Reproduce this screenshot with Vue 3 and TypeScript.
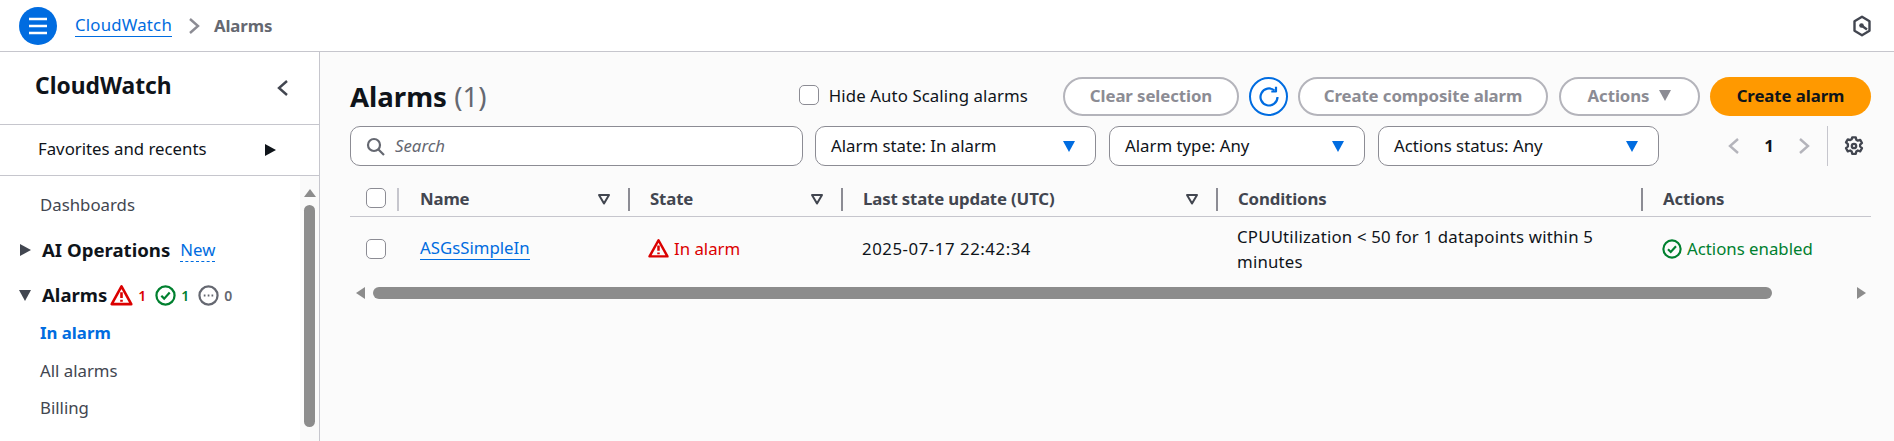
<script setup lang="ts">
const filters: { label: string; width: number }[] = [
  { label: 'Alarm state: In alarm', width: 281 },
  { label: 'Alarm type: Any', width: 256 },
  { label: 'Actions status: Any', width: 281 },
]
const columns: { label: string; sort: boolean }[] = [
  { label: 'Name', sort: true },
  { label: 'State', sort: true },
  { label: 'Last state update (UTC)', sort: true },
  { label: 'Conditions', sort: false },
  { label: 'Actions', sort: false },
]
</script>

<template>
  <div class="page">
    <header class="topbar">
      <button class="menu" aria-label="Menu">
        <svg width="20" height="20" viewBox="0 0 20 20" fill="none" stroke="#fff" stroke-width="2.4">
          <path d="M1 3h18M1 10h18M1 17h18" />
        </svg>
      </button>
      <a class="crumb-link">CloudWatch</a>
      <svg class="crumb-sep" width="12" height="18" viewBox="0 0 12 18" fill="none" stroke="#8c8c94" stroke-width="2.4">
        <path d="M2 2l8 7-8 7" />
      </svg>
      <span class="crumb-current">Alarms</span>
      <svg class="hex" width="20" height="22" viewBox="0 0 20 22" fill="none" stroke="#424650" stroke-width="2.4">
        <path d="M10 1.8l7.500 4.400v9.600l-7.500 4.400-7.500-4.400V6.200z" stroke-linejoin="round" />
        <circle cx="9.500" cy="10.500" r="2.300" fill="#424650" stroke="none" />
        <path d="M9.500 10.500l5.500 4" stroke-width="2.400" />
      </svg>
    </header>

    <div class="body">
      <aside class="side">
        <div class="side-title">
          <h2>CloudWatch</h2>
          <svg width="12" height="18" viewBox="0 0 12 18" fill="none" stroke="#424650" stroke-width="2.4">
            <path d="M10 2L2 9l8 7" />
          </svg>
        </div>
        <div class="side-fav">
          <span>Favorites and recents</span>
          <i class="tri-right dark"></i>
        </div>
        <div class="side-nav">
          <nav class="nav-list">
            <a class="nav-item dash">Dashboards</a>
            <div class="nav-section ai">
              <i class="tri-right"></i>
              <b>AI Operations</b>
              <span class="new">New</span>
            </div>
            <div class="nav-section alarms">
              <i class="tri-down"></i>
              <b>Alarms</b>
              <svg class="s-warn" width="23" height="23" viewBox="0 0 16 16" fill="none" stroke="#db0000" stroke-width="1.800" stroke-linejoin="round">
                <path d="M8 1.700L1.200 14h13.600z" />
                <path d="M8 5.800v4M8 11v1.400" />
              </svg>
              <span class="count red">1</span>
              <svg class="s-ok" width="21" height="21" viewBox="0 0 16 16" fill="none" stroke="#00802f" stroke-width="1.700">
                <circle cx="8" cy="8" r="6.900" />
                <path d="M4.800 8.200l2.200 2.200 4.200-4.600" />
              </svg>
              <span class="count green">1</span>
              <svg class="s-ok" width="21" height="21" viewBox="0 0 16 16" fill="none" stroke="#656871" stroke-width="1.700">
                <circle cx="8" cy="8" r="6.900" />
                <path d="M4.400 8h1.300M7.400 8h1.300M10.300 8h1.300" />
              </svg>
              <span class="count gray">0</span>
            </div>
            <a class="nav-item active">In alarm</a>
            <a class="nav-item all">All alarms</a>
            <a class="nav-item bill">Billing</a>
          </nav>
          <div class="side-scroll">
            <i class="sb-up"></i>
            <i class="sb-thumb"></i>
          </div>
        </div>
      </aside>

      <main class="main">
        <div class="head-row">
          <h1>Alarms <span>(1)</span></h1>
          <label class="hide-check"><i class="box"></i>Hide Auto Scaling alarms</label>
          <button class="btn disabled clear">Clear selection</button>
          <button class="refresh" aria-label="Refresh">
            <svg width="24" height="24" viewBox="0 0 24 24" fill="none" stroke="#006ce0" stroke-width="2.200">
              <path d="M20.500 12a8.500 8.500 0 1 1-3-6.500" />
              <path d="M19 1.800v4.700h-4.700" stroke-linejoin="round" />
            </svg>
          </button>
          <button class="btn disabled composite">Create composite alarm</button>
          <button class="btn disabled actions">Actions <i class="tri-small"></i></button>
          <button class="btn primary">Create alarm</button>
        </div>

        <div class="filter-row">
          <div class="search">
            <svg width="19" height="19" viewBox="0 0 19 19" fill="none" stroke="#656871" stroke-width="2.200">
              <circle cx="8" cy="8" r="6" />
              <path d="M12.500 12.500L18 18" />
            </svg>
            <span>Search</span>
          </div>
          <div v-for="f in filters" :key="f.label" class="select" :style="{ width: f.width + 'px' }">
            <span>{{ f.label }}</span>
            <i class="tri-blue"></i>
          </div>
          <div class="pager">
            <svg width="12" height="18" viewBox="0 0 12 18" fill="none" stroke="#b4b4bb" stroke-width="2.400">
              <path d="M10 2L2 9l8 7" />
            </svg>
            <b>1</b>
            <svg width="12" height="18" viewBox="0 0 12 18" fill="none" stroke="#b4b4bb" stroke-width="2.400">
              <path d="M2 2l8 7-8 7" />
            </svg>
          </div>
          <div class="prefs">
            <svg width="20" height="20" viewBox="0 0 20 20" fill="none" stroke="#424650" stroke-width="2.300" stroke-linejoin="round">
              <path d="M8.200 1.400h3.600l.5 2.400 1.500.9 2.400-.8 1.800 3.100-1.900 1.700v1.800l1.900 1.700-1.800 3.100-2.400-.8-1.500.9-.5 2.400H8.200l-.5-2.400-1.500-.9-2.400.8-1.800-3.100 1.900-1.700V8.100L2 6.400l1.800-3.100 2.400.8 1.500-.9z" />
              <circle cx="10" cy="10" r="2.200" />
            </svg>
          </div>
        </div>

        <div class="table">
          <div class="cell-check head"><i class="box"></i></div>
          <div v-for="c in columns" :key="c.label" class="th">
            <span>{{ c.label }}</span>
            <svg v-if="c.sort" width="14" height="12" viewBox="0 0 14 12" fill="none" stroke="#424650" stroke-width="2" stroke-linejoin="round">
              <path d="M2 2h10L7 10.500z" />
            </svg>
          </div>
          <div class="rule"></div>
          <div class="cell-check"><i class="box"></i></div>
          <div class="td"><a class="link">ASGsSimpleIn</a></div>
          <div class="td state">
            <svg width="21" height="21" viewBox="0 0 16 16" fill="none" stroke="#db0000" stroke-width="1.900" stroke-linejoin="round">
              <path d="M8 1.700L1.200 14h13.600z" />
              <path d="M8 5.800v4M8 11v1.400" />
            </svg>
            <span>In alarm</span>
          </div>
          <div class="td date">2025-07-17 22:42:34</div>
          <div class="td cond">CPUUtilization &lt; 50 for 1 datapoints within 5 minutes</div>
          <div class="td enabled">
            <svg width="20" height="20" viewBox="0 0 16 16" fill="none" stroke="#00802f" stroke-width="1.700">
              <circle cx="8" cy="8" r="6.900" />
              <path d="M4.800 8.200l2.200 2.200 4.200-4.600" />
            </svg>
            <span>Actions enabled</span>
          </div>
        </div>

        <div class="hscroll">
          <i class="hs-left"></i>
          <i class="hs-thumb"></i>
          <i class="hs-right"></i>
        </div>
      </main>
    </div>
  </div>
</template>

<style>
html, body { margin: 0; background: #fff; overflow: hidden; }
</style>

<style scoped>
* { box-sizing: border-box; }
.page {
  width: 1894px;
  height: 441px;
  overflow: hidden;
  font-family: "Noto Sans", "Open Sans", sans-serif;
  font-size: 16.800px;
  color: #0f141a;
  display: flex;
  flex-direction: column;
}
i { display: block; font-style: normal; }
button { font-family: inherit; }

.topbar {
  height: 52px;
  flex: none;
  border-bottom: 1px solid #c6c6cd;
  background: #fff;
  display: flex;
  align-items: center;
  padding-left: 19px;
}
.menu {
  width: 38px;
  height: 38px;
  border-radius: 50%;
  border: 0;
  padding: 0;
  background: #006ce0;
  display: flex;
  align-items: center;
  justify-content: center;
}
.crumb-link {
  margin-left: 18px;
  color: #006ce0;
  line-height: 22px;
  letter-spacing: 0.2px;
  border-bottom: 1.500px solid #006ce0;
}
.crumb-sep { margin-left: 16px; }
.crumb-current { margin-left: 14px; font-weight: 700; color: #656871; letter-spacing: -0.1px; }
.hex { margin-left: auto; margin-right: 22px; }

.body { flex: 1; display: flex; min-height: 0; }

.side {
  width: 320px;
  flex: none;
  background: #fff;
  border-right: 1px solid #c6c6cd;
  display: flex;
  flex-direction: column;
}
.side-title {
  height: 73px;
  flex: none;
  border-bottom: 1px solid #c6c6cd;
  display: flex;
  align-items: center;
  justify-content: space-between;
  padding: 0 30px 0 35px;
}
.side-title h2 { margin: 0 0 6px; font-size: 22.800px; font-weight: 700; }
.side-fav {
  height: 51px;
  flex: none;
  border-bottom: 1px solid #c6c6cd;
  display: flex;
  align-items: center;
  justify-content: space-between;
  padding: 0 43px 0 38px;
}
.side-fav span { padding-bottom: 3px; }
.side-nav { flex: 1; display: flex; min-height: 0; }
.nav-list { flex: 1; padding-top: 16px; color: #424650; }
.nav-item { display: block; margin-left: 40px; line-height: 26px; }
.nav-section { display: flex; align-items: center; height: 26px; padding-left: 20px; color: #0f141a; }
.nav-section b { font-size: 18.600px; margin-left: 11px; padding-bottom: 2px; }
.ai { margin-top: 19px; }
.alarms { margin-top: 19px; padding-left: 19px; }
.new { margin-left: 10px; color: #006ce0; line-height: 22px; border-bottom: 1.500px dashed #006ce0; }
.s-warn { margin-left: 3px; }
.s-ok { margin-left: 9px; }
.count { font-size: 14px; font-weight: 600; margin-left: 5px; }
.red { color: #db0000; }
.green { color: #00802f; }
.gray { color: #656871; }
.active { color: #006ce0; font-weight: 700; margin-top: 12px; }
.all { margin-top: 12px; }
.bill { margin-top: 11px; }

.side-scroll {
  width: 19px;
  flex: none;
  background: #fafafa;
  padding-top: 13px;
  display: flex;
  flex-direction: column;
  align-items: center;
}
.sb-up { width: 0; height: 0; border: 6px solid transparent; border-top: 0; border-bottom: 8px solid #8c8c8c; }
.sb-thumb { width: 11px; height: 222px; margin-top: 8px; border-radius: 6px; background: #8c8c8c; }

.tri-right { width: 0; height: 0; border-style: solid; border-width: 6.500px 0 6.500px 11px; border-color: transparent transparent transparent #424650; }
.tri-right.dark { border-left-color: #0f141a; }
.tri-down { width: 0; height: 0; border-style: solid; border-width: 11px 6.500px 0 6.500px; border-color: #424650 transparent transparent transparent; }

.main {
  flex: 1;
  min-width: 0;
  background: #fbfbfb;
  padding: 25px 23px 0 30px;
}
.head-row { display: flex; align-items: center; height: 39px; }
h1 { margin: 0 0 2px; font-size: 27.600px; font-weight: 700; white-space: nowrap; }
h1 span { font-weight: 400; color: #656871; }
.hide-check { margin-left: auto; padding-bottom: 3px; display: flex; align-items: center; color: #0f141a; letter-spacing: 0.1px; }
.box {
  width: 20px;
  height: 20px;
  flex: none;
  background: #fff;
  border: 1.500px solid #8c8c94;
  border-radius: 5px;
}
.hide-check .box { margin-right: 10px; }
.btn {
  height: 39px;
  border-radius: 20px;
  background: #fff;
  font-size: 16.800px;
  font-weight: 700;
  padding: 0 0 2px;
  letter-spacing: -0.08px;
  display: flex;
  align-items: center;
  justify-content: center;
}
.disabled { border: 2.400px solid #b4b4bb; color: #8c8c94; }
.clear { width: 176px; margin-left: 35px; }
.refresh {
  width: 39px;
  height: 39px;
  margin-left: 10px;
  border-radius: 50%;
  border: 2.400px solid #006ce0;
  background: #fff;
  padding: 0;
  display: flex;
  align-items: center;
  justify-content: center;
}
.composite { width: 250px; margin-left: 10px; }
.actions { width: 141px; margin-left: 11px; gap: 10px; }
.tri-small { width: 0; height: 0; border-style: solid; border-width: 11px 6.500px 0 6.500px; border-color: #8c8c94 transparent transparent transparent; }
.primary { width: 161px; margin-left: 10px; border: 0; background: #f90; color: #0f141a; }

.filter-row { display: flex; align-items: center; height: 40px; margin-top: 10px; gap: 13px; }
.search, .select {
  height: 40px;
  background: #fff;
  border: 1.200px solid #8c8c94;
  border-radius: 10px;
  display: flex;
  align-items: center;
  flex: none;
}
.search { width: 453px; margin-right: -1px; padding-left: 15px; gap: 10px; }
.search span { font-style: italic; color: #656871; padding-bottom: 2px; }
.select { justify-content: space-between; padding: 0 20px 0 15px; }
.select span { padding-bottom: 2px; }
.tri-blue { width: 0; height: 0; border-style: solid; border-width: 11px 6.500px 0 6.500px; border-color: #006ce0 transparent transparent transparent; }
.pager { margin-left: 56px; width: 82px; display: flex; align-items: center; justify-content: space-between; }
.pager b { font-size: 16.800px; padding-bottom: 2px; }
.prefs {
  margin-left: 4px;
  padding-left: 16px;
  height: 40px;
  border-left: 1px solid #c6c6cd;
  display: flex;
  align-items: center;
}

.table {
  margin-top: 22px;
  display: grid;
  grid-template-columns: 49px 229px 213px 375px 425px 230px;
  grid-template-rows: 23px 6px auto;
}
.cell-check { padding-left: 16px; }
.cell-check.head { border-right: 2px solid #c6c6cd; }
.th {
  display: flex;
  align-items: center;
  justify-content: space-between;
  font-weight: 700;
  color: #424650;
  letter-spacing: -0.15px;
  padding: 0 17px 2px 20px;
  border-left: 2px solid #8c8c94;
}
.cell-check.head + .th { border-left: 0; padding-left: 21px; }
.rule { grid-column: 1 / -1; grid-row: 2; border-bottom: 1.200px solid #c6c6cd; }
.td { display: flex; align-items: center; padding-left: 21px; line-height: 25px; }
.cell-check:not(.head) { display: flex; align-items: center; }
.table > .td, .table > .cell-check:not(.head) { height: 63px; }
.link { color: #006ce0; line-height: 22px; border-bottom: 1.500px solid #006ce0; }
.state { color: #db0000; gap: 5px; padding-left: 20px; }
.enabled { color: #00802f; gap: 5px; }
.date { letter-spacing: 0.55px; }
.cond { padding-right: 8px; letter-spacing: 0.2px; }

.hscroll { display: flex; align-items: center; height: 12px; margin-top: 7px; }
.hs-left { margin-left: 6px; width: 0; height: 0; border-style: solid; border-width: 6px 9px 6px 0; border-color: transparent #8c8c8c transparent transparent; }
.hs-thumb { margin-left: 8px; width: 1399px; height: 12px; border-radius: 6px; background: #8c8c8c; }
.hs-right { margin-left: 85px; width: 0; height: 0; border-style: solid; border-width: 6px 0 6px 9px; border-color: transparent transparent transparent #8c8c8c; }
</style>
